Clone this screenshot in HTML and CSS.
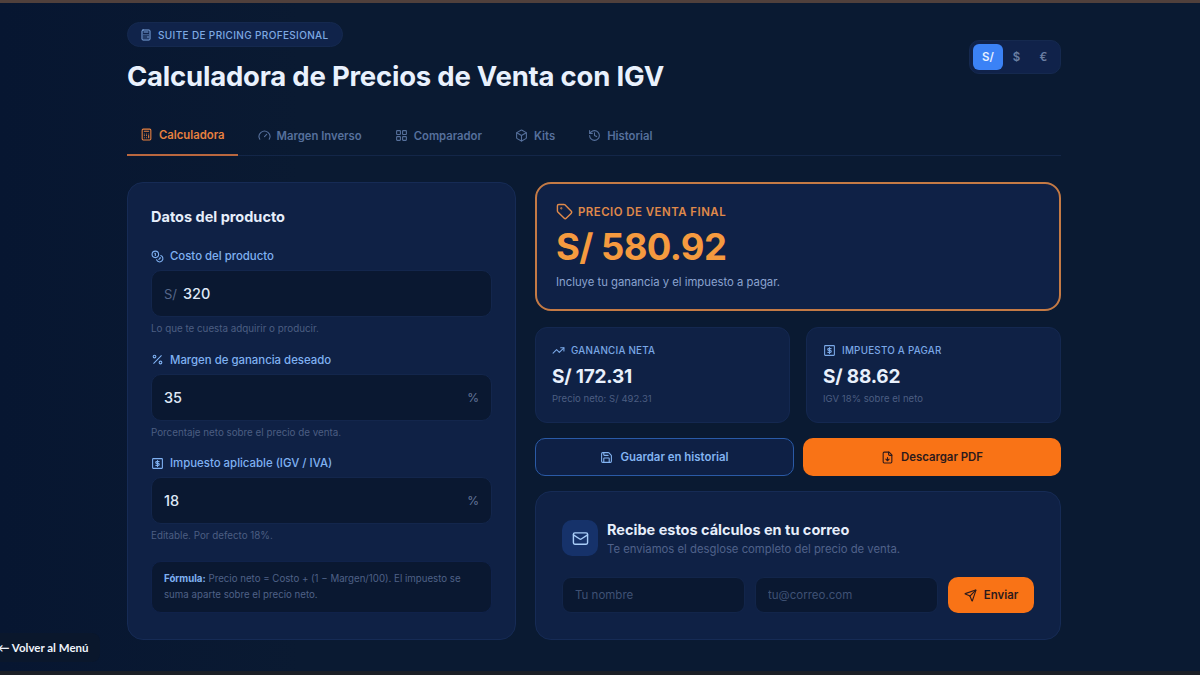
FILE: index.html
```html
<!DOCTYPE html>
<html lang="es">
<head>
    <meta charset="UTF-8">
    <meta name="viewport" content="width=device-width, initial-scale=1.0">
    <title>Calculadora de Precios de Venta con IGV</title>
    <link rel="stylesheet" href="styles.css">
</head>
<body>
    <div class="page">
        <header class="header">
            <div>
                <div class="badge">
                    <svg class="icon icon-13" viewBox="0 0 24 24"><rect x="4" y="2" width="16" height="20" rx="2"/><path d="M8 6h8M8 11h.01M12 11h.01M16 11h.01M8 14h.01M12 14h.01M16 14v4M8 18h.01M12 18h.01"/></svg>
                    SUITE DE PRICING PROFESIONAL
                </div>
                <h1>Calculadora de Precios de Venta con IGV</h1>
            </div>
            <div class="currency">
                <span class="currency-item active">S/</span>
                <span class="currency-item">$</span>
                <span class="currency-item">€</span>
            </div>
        </header>

        <nav class="tabs">
            <a class="tab active" href="#">
                <svg class="icon" viewBox="0 0 24 24"><rect x="4" y="2" width="16" height="20" rx="2"/><path d="M8 6h8M8 11h.01M12 11h.01M16 11h.01M8 14h.01M12 14h.01M16 14v4M8 18h.01M12 18h.01"/></svg>
                Calculadora
            </a>
            <a class="tab" href="#">
                <svg class="icon" viewBox="0 0 24 24"><path d="m12 14 4-4"/><path d="M3.34 19a10 10 0 1 1 17.32 0"/></svg>
                Margen Inverso
            </a>
            <a class="tab" href="#">
                <svg class="icon" viewBox="0 0 24 24"><rect x="3" y="3" width="7" height="7" rx="1"/><rect x="14" y="3" width="7" height="7" rx="1"/><rect x="14" y="14" width="7" height="7" rx="1"/><rect x="3" y="14" width="7" height="7" rx="1"/></svg>
                Comparador
            </a>
            <a class="tab" href="#">
                <svg class="icon" viewBox="0 0 24 24"><path d="M21 8a2 2 0 0 0-1-1.73l-7-4a2 2 0 0 0-2 0l-7 4A2 2 0 0 0 3 8v8a2 2 0 0 0 1 1.73l7 4a2 2 0 0 0 2 0l7-4A2 2 0 0 0 21 16Z"/><path d="m3.3 7 8.7 5 8.7-5M12 22V12"/></svg>
                Kits
            </a>
            <a class="tab" href="#">
                <svg class="icon" viewBox="0 0 24 24"><path d="M3 12a9 9 0 1 0 9-9 9.75 9.75 0 0 0-6.74 2.74L3 8"/><path d="M3 3v5h5M12 7v5l4 2"/></svg>
                Historial
            </a>
        </nav>

        <main class="layout">
            <section class="card product">
                <h2>Datos del producto</h2>

                <label class="field-label">
                    <svg class="icon" viewBox="0 0 24 24"><circle cx="8" cy="8" r="6"/><path d="M18.09 10.37A6 6 0 1 1 10.34 18"/><path d="M7 6h1v4M16.71 13.88l.7.71-2.82 2.82"/></svg>
                    Costo del producto
                </label>
                <div class="input-box">
                    <span class="prefix">S/</span>
                    <input class="input-value" type="text" value="320">
                </div>
                <p class="hint">Lo que te cuesta adquirir o producir.</p>

                <label class="field-label">
                    <svg class="icon" viewBox="0 0 24 24"><path d="M19 5 5 19"/><circle cx="6.5" cy="6.5" r="2.5"/><circle cx="17.5" cy="17.5" r="2.5"/></svg>
                    Margen de ganancia deseado
                </label>
                <div class="input-box">
                    <input class="input-value" type="text" value="35">
                    <span class="suffix">%</span>
                </div>
                <p class="hint">Porcentaje neto sobre el precio de venta.</p>

                <label class="field-label">
                    <svg class="icon" viewBox="0 0 24 24"><rect x="3" y="3" width="18" height="18" rx="1"/><path d="M15 8.5h-4.5a1.75 1.75 0 0 0 0 3.5h3a1.75 1.75 0 0 1 0 3.5H9M12 6.5v11"/></svg>
                    Impuesto aplicable (IGV / IVA)
                </label>
                <div class="input-box">
                    <input class="input-value" type="text" value="18">
                    <span class="suffix">%</span>
                </div>
                <p class="hint">Editable. Por defecto 18%.</p>

                <div class="formula">
                    <strong>Fórmula:</strong> Precio neto = Costo + (1 − Margen/100). El impuesto se suma aparte sobre el precio neto.
                </div>
            </section>

            <div class="results">
                <section class="hero">
                    <div class="hero-label">
                        <svg class="icon icon-17" viewBox="0 0 24 24"><path d="M12.59 2.59A2 2 0 0 0 11.17 2H4a2 2 0 0 0-2 2v7.17a2 2 0 0 0 .59 1.42l8.7 8.7a2.43 2.43 0 0 0 3.42 0l6.58-6.58a2.43 2.43 0 0 0 0-3.42z"/><circle cx="7.5" cy="7.5" r=".5"/></svg>
                        PRECIO DE VENTA FINAL
                    </div>
                    <div class="hero-price">S/ 580.92</div>
                    <p class="hero-note">Incluye tu ganancia y el impuesto a pagar.</p>
                </section>

                <div class="stats">
                    <section class="stat">
                        <div class="stat-label">
                            <svg class="icon" viewBox="0 0 24 24"><path d="M22 7l-8.5 8.5-5-5L2 17"/><path d="M16 7h6v6"/></svg>
                            GANANCIA NETA
                        </div>
                        <div class="stat-value">S/ 172.31</div>
                        <p class="stat-note">Precio neto: S/ 492.31</p>
                    </section>
                    <section class="stat">
                        <div class="stat-label">
                            <svg class="icon" viewBox="0 0 24 24"><rect x="3" y="3" width="18" height="18" rx="1"/><path d="M15 8.5h-4.5a1.75 1.75 0 0 0 0 3.5h3a1.75 1.75 0 0 1 0 3.5H9M12 6.5v11"/></svg>
                            IMPUESTO A PAGAR
                        </div>
                        <div class="stat-value">S/ 88.62</div>
                        <p class="stat-note">IGV 18% sobre el neto</p>
                    </section>
                </div>

                <div class="actions">
                    <button class="btn btn-outline">
                        <svg class="icon" viewBox="0 0 24 24"><path d="M15.2 3a2 2 0 0 1 1.4.6l3.8 3.8a2 2 0 0 1 .6 1.4V19a2 2 0 0 1-2 2H5a2 2 0 0 1-2-2V5a2 2 0 0 1 2-2z"/><path d="M17 21v-7a1 1 0 0 0-1-1H8a1 1 0 0 0-1 1v7M7 3v4a1 1 0 0 0 1 1h7"/></svg>
                        Guardar en historial
                    </button>
                    <button class="btn btn-orange">
                        <svg class="icon" viewBox="0 0 24 24"><path d="M15 2H6a2 2 0 0 0-2 2v16a2 2 0 0 0 2 2h12a2 2 0 0 0 2-2V7Z"/><path d="M14 2v4a2 2 0 0 0 2 2h4M12 18v-6M9 15l3 3 3-3"/></svg>
                        Descargar PDF
                    </button>
                </div>

                <section class="card mail">
                    <div class="mail-head">
                        <div class="mail-icon">
                            <svg class="icon icon-17" viewBox="0 0 24 24"><rect x="2" y="4" width="20" height="16" rx="2"/><path d="m22 7-8.97 5.7a1.94 1.94 0 0 1-2.06 0L2 7"/></svg>
                        </div>
                        <div>
                            <h3>Recibe estos cálculos en tu correo</h3>
                            <p>Te enviamos el desglose completo del precio de venta.</p>
                        </div>
                    </div>
                    <form class="mail-form">
                        <input class="mail-input" type="text" placeholder="Tu nombre">
                        <input class="mail-input" type="text" placeholder="tu@correo.com">
                        <button class="btn btn-orange btn-send" type="button">
                            <svg class="icon" viewBox="0 0 24 24"><path d="M14.54 21.69a.5.5 0 0 0 .93-.02l6.5-19a.5.5 0 0 0-.64-.64l-19 6.5a.5.5 0 0 0-.02.93l7.93 3.18a2 2 0 0 1 1.11 1.11z"/><path d="m21.85 2.15-10.94 10.94"/></svg>
                            Enviar
                        </button>
                    </form>
                </section>
            </div>
        </main>
    </div>

    <a class="back-link" href="#">← Volver al Menú</a>
    <div class="bottom-strip"></div>
</body>
</html>
```

FILE: styles.css
```css
* {
    box-sizing: border-box;
}
html, body {
    height: 675px;
    overflow: hidden;
}
body {
    margin: 0;
    border-top: 3px solid #50403c;
    font-family: 'Inter', sans-serif;
    color: #e8f0ff;
    background: linear-gradient(90deg, #071631 0%, #0a1a32 25%);
}
.icon {
    width: 13px;
    height: 13px;
    flex: none;
    fill: none;
    stroke: currentColor;
    stroke-width: 2;
    stroke-linecap: round;
    stroke-linejoin: round;
}
.icon-13 {
    width: 12px;
    height: 12px;
}
.icon-17 {
    width: 17px;
    height: 17px;
}
.page {
    width: 934px;
    margin: 0 0 0 127px;
}

/* header */
.header {
    display: flex;
    justify-content: space-between;
    align-items: flex-start;
    padding-top: 19px;
}
.badge {
    display: inline-flex;
    align-items: center;
    gap: 6px;
    height: 25px;
    padding: 0 13px 0 12px;
    border: 1px solid #15294f;
    border-radius: 13px;
    background: #10234a;
    color: #7ea9e2;
    font-size: 10px;
    font-weight: 500;
    letter-spacing: 0.35px;
}
h1 {
    margin: 12px 0 0;
    font-size: 27.5px;
    line-height: 34px;
    font-weight: 700;
    letter-spacing: -0.22px;
    color: #e9f1fd;
}
.currency {
    display: flex;
    width: 92px;
    height: 34px;
    margin-top: 18px;
    padding: 3px;
    border: 1px solid #15294f;
    border-radius: 10px;
    background: #10224a;
}
.currency-item {
    display: flex;
    align-items: center;
    justify-content: center;
    width: 27px;
    color: #6b7fa3;
    font-size: 11.5px;
    font-weight: 600;
}
.currency-item.active {
    width: 30px;
    border-radius: 6px;
    background: #3b82f6;
    color: #e6f0ff;
}

/* tabs */
.tabs {
    display: flex;
    height: 36px;
    margin-top: 27px;
    border-bottom: 1px solid #132648;
}
.tab {
    display: flex;
    align-items: center;
    gap: 6px;
    height: 36px;
    padding: 0 13px 5px;
    margin-right: 7px;
    color: #56709c;
    font-size: 11.3px;
    font-weight: 600;
    text-decoration: none;
}
.tab.active {
    color: #e9813f;
    border-bottom: 2px solid #b9673f;
}

/* layout */
.layout {
    display: grid;
    grid-template-columns: 389px 526px;
    gap: 19px;
    margin-top: 26px;
}
.card {
    border: 1px solid #162b55;
    border-radius: 16px;
    background: #0f2145;
}
.product {
    height: 458px;
    padding: 24px 23px 0;
}
h2 {
    margin: 0 0 21px;
    font-size: 14.5px;
    line-height: 20px;
    font-weight: 700;
    color: #e6eefb;
}
.field-label {
    display: flex;
    align-items: center;
    gap: 6px;
    height: 16px;
    margin-bottom: 6px;
    color: #7fb1f2;
    font-size: 11.4px;
    font-weight: 500;
}
.input-box {
    display: flex;
    align-items: center;
    height: 47px;
    padding: 0 12px;
    border: 1px solid #13264c;
    border-radius: 10px;
    background: #0a1831;
}
.input-value {
    flex: 1;
    min-width: 0;
    border: 0;
    outline: 0;
    padding: 0;
    background: transparent;
    color: #dfe8f7;
    font-family: 'Inter', sans-serif;
    font-size: 14.5px;
    font-weight: 500;
}
.prefix {
    margin-right: 6px;
    color: #56678a;
    font-size: 13px;
}
.suffix {
    color: #64769a;
    font-size: 12px;
}
.hint {
    margin: 5px 0 16.5px;
    color: #4c5e82;
    font-size: 9.8px;
    line-height: 13px;
}
.formula {
    height: 52px;
    margin-top: 19px;
    padding: 9px 12px;
    border: 1px solid #10224a;
    border-radius: 10px;
    background: #0a1831;
    color: #4f6187;
    font-size: 9.7px;
    line-height: 16px;
}
.formula strong {
    color: #7fb1f2;
    font-weight: 700;
}

/* results */
.results {
    display: flex;
    flex-direction: column;
}
.hero {
    height: 129px;
    padding: 19px 19px 0;
    border: 2px solid #c47a45;
    border-radius: 16px;
    background: #0f2146;
}
.hero-label {
    display: flex;
    align-items: center;
    gap: 5px;
    height: 17px;
    color: #e08a4a;
    font-size: 11.4px;
    font-weight: 600;
    letter-spacing: 0.5px;
}
.hero-price {
    margin-top: 6px;
    color: #f59a3f;
    font-size: 36.5px;
    line-height: 42px;
    font-weight: 700;
    letter-spacing: -0.6px;
}
.hero-note {
    margin: 7px 0 0;
    color: #8ba3cf;
    font-size: 11.3px;
    line-height: 15px;
}
.stats {
    display: grid;
    grid-template-columns: 255px 255px;
    gap: 16px;
    margin-top: 16px;
}
.stat {
    height: 96px;
    padding: 15px 16px 0;
    border: 1px solid #142850;
    border-radius: 12px;
    background: #0f2145;
}
.stat-label {
    display: flex;
    align-items: center;
    gap: 6px;
    height: 14px;
    color: #7aa8e6;
    font-size: 9.8px;
    font-weight: 500;
    letter-spacing: 0.25px;
}
.stat-value {
    margin-top: 8px;
    color: #e8f0fc;
    font-size: 19px;
    line-height: 24px;
    font-weight: 700;
    letter-spacing: -0.2px;
}
.stat-note {
    margin: 3px 0 0;
    color: #4c5e82;
    font-size: 9.5px;
    line-height: 13px;
    letter-spacing: 0.05px;
}
.actions {
    display: grid;
    grid-template-columns: 259px 258px;
    gap: 9px;
    margin-top: 15px;
}
.btn {
    display: flex;
    align-items: center;
    justify-content: center;
    gap: 7px;
    height: 38px;
    padding: 0;
    border-radius: 10px;
    font-family: 'Inter', sans-serif;
    font-size: 11.4px;
    font-weight: 600;
}
.btn-outline {
    border: 1px solid #2a5aa6;
    background: #0e2045;
    color: #83b4f2;
}
.btn-orange {
    border: 0;
    background: #f97316;
    color: #2c1a1c;
}
.mail {
    height: 149px;
    margin-top: 15px;
    padding: 28px 26px 0;
}
.mail-head {
    display: flex;
    gap: 9px;
    height: 37px;
}
.mail-icon {
    display: flex;
    align-items: center;
    justify-content: center;
    width: 36px;
    height: 36px;
    border-radius: 10px;
    background: #16326a;
    color: #a9cdf8;
}
h3 {
    margin: 0;
    color: #e6eefb;
    font-size: 14.5px;
    line-height: 20px;
    font-weight: 700;
}
.mail-head p {
    margin: 1px 0 0;
    color: #4f628a;
    font-size: 11.3px;
    line-height: 16px;
}
.mail-form {
    display: flex;
    gap: 10px;
    margin-top: 20px;
}
.mail-input {
    width: 183px;
    height: 36px;
    padding: 0 12px;
    border: 1px solid #12254a;
    border-radius: 9px;
    outline: 0;
    background: #0a1831;
    color: #dfe8f7;
    font-family: 'Inter', sans-serif;
    font-size: 11.5px;
}
.mail-input::placeholder {
    color: #3f5174;
    opacity: 1;
}
.btn-send {
    width: 86px;
    height: 36px;
}

/* overlays */
.back-link {
    position: fixed;
    left: -2px;
    top: 633px;
    display: flex;
    align-items: center;
    width: 102px;
    height: 29px;
    border-radius: 0 8px 8px 0;
    background: #0a172c;
    color: #eef3fb;
    font-family: 'Lato', sans-serif;
    font-size: 11.5px;
    font-weight: 700;
    text-decoration: none;
    white-space: nowrap;
}
.bottom-strip {
    position: fixed;
    left: 0;
    right: 0;
    bottom: 0;
    height: 4px;
    background: #1b1f26;
}
```
